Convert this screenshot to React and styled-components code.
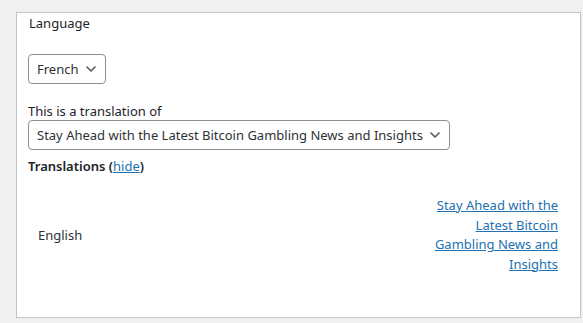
import React from "react";
import styled, { createGlobalStyle } from "styled-components";

const Global = createGlobalStyle`
  html, body { margin: 0; padding: 0; background: #f0f0f1; }
  body { font-family: "Noto Sans", "Open Sans", sans-serif; font-size: 13px; color: #1d2327; }
`;

const Page = styled.div`
  padding: 12px 2px 0 16px;
  height: 323px;
  box-sizing: border-box;
`;

const Panel = styled.div`
  background: #fff;
  border: 1px solid #c3c4c7;
  height: 306px;
  box-sizing: border-box;
  padding: 0 11px 0 11px;
  display: flex;
  flex-direction: column;
`;

const Label = styled.div`
  font-size: 13px;
  line-height: ${(p) => p.$lh || 20}px;
  padding-left: ${(p) => p.$indent || 0}px;
  margin-top: ${(p) => p.$top || 0}px;
`;

const SelectBox = styled.div`
  display: inline-flex;
  align-items: center;
  align-self: flex-start;
  gap: 6px;
  height: 30px;
  box-sizing: border-box;
  border: 1px solid #8c8f94;
  border-radius: 4px;
  padding: 0 8px 0 8px;
  margin-top: ${(p) => p.$top || 0}px;
  font-size: 13px;
  color: #2c3338;
  white-space: nowrap;
`;

const Heading = styled.div`
  margin-top: 6px;
  font-weight: 600;
  line-height: 20px;
  color: #1d2327;
  a { font-weight: 400; }
`;

const Link = styled.a`
  color: #2271b1;
  text-decoration: underline;
`;

const Row = styled.div`
  display: flex;
  align-items: center;
  justify-content: space-between;
  margin-top: 20px;
  padding: 0 10px;
`;

const LangCell = styled.div`
  color: #2c3338;
`;

const TitleCell = styled.div`
  width: 125px;
  text-align: right;
  line-height: 19.5px;
  margin-right: 1px;
`;

const Chevron = () => (
  <svg width="12" height="12" viewBox="0 0 12 12" fill="none">
    <path d="M2 4l4 4 4-4" stroke="#50575e" strokeWidth="1.6" strokeLinecap="round" strokeLinejoin="round" />
  </svg>
);

export default function App() {
  return (
    <>
      <Global />
      <Page>
        <Panel>
          <Label $indent={1}>Language</Label>
          <SelectBox $top={21}>French <Chevron /></SelectBox>
          <Label $top={18} $lh={18}>This is a translation of</Label>
          <SelectBox>Stay Ahead with the Latest Bitcoin Gambling News and Insights <Chevron /></SelectBox>
          <Heading>
            Translations (<Link href="#">hide</Link>)
          </Heading>
          <Row>
            <LangCell>English</LangCell>
            <TitleCell>
              <Link href="#">Stay Ahead with the Latest Bitcoin Gambling News and Insights</Link>
            </TitleCell>
          </Row>
        </Panel>
      </Page>
    </>
  );
}
